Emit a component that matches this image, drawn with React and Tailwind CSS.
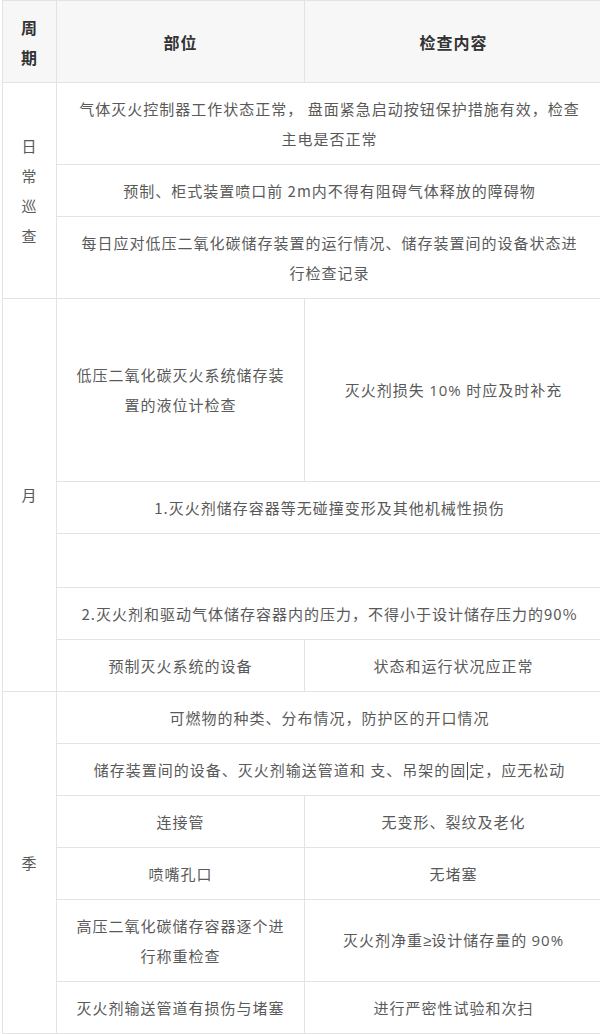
import React from "react";

const cell =
  "border border-[#e3e3e3] px-[18px] py-[10.5px] text-center align-middle leading-[30px]";
const side =
  "border border-[#e3e3e3] px-[12px] py-[10.5px] text-center align-middle leading-[30px]";

const Row = ({ children, className = "" }) => (
  <tr className={className}>{children}</tr>
);

export default function App() {
  return (
    <div className="w-[600px] overflow-hidden bg-white font-['Noto_Sans_CJK_SC','Noto_Sans',sans-serif]">
      <table className="ml-[2px] w-[600px] table-fixed border-collapse text-[15px] tracking-[1px] text-[#595959]">
        <colgroup>
          <col className="w-[54px]" />
          <col className="w-[248px]" />
          <col className="w-[298px]" />
        </colgroup>
        <thead>
          <tr className="bg-[#f7f7f7] text-[16px] font-bold text-[#333]">
            <th className={side}>周期</th>
            <th className={cell}>部位</th>
            <th className={cell}>检查内容</th>
          </tr>
        </thead>
        <tbody>
          {/* 日常巡查 */}
          <Row>
            <td className={side} rowSpan={3}>
              日常巡查
            </td>
            <td className={cell} colSpan={2}>
              气体灭火控制器工作状态正常， 盘面紧急启动按钮保护措施有效，检查主电是否正常
            </td>
          </Row>
          <Row>
            <td className={cell} colSpan={2}>
              预制、柜式装置喷口前 2m内不得有阻碍气体释放的障碍物
            </td>
          </Row>
          <Row>
            <td className={cell} colSpan={2}>
              每日应对低压二氧化碳储存装置的运行情况、储存装置间的设备状态进行检查记录
            </td>
          </Row>

          {/* 月 */}
          <Row>
            <td className={side} rowSpan={5}>
              月
            </td>
            <td className={`${cell} h-[183px]`}>
              低压二氧化碳灭火系统储存装置的液位计检查
            </td>
            <td className={cell}>
              灭火剂损失 <span className="font-['Open_Sans',sans-serif]">10%</span> 时应及时补充
            </td>
          </Row>
          <Row>
            <td className={cell} colSpan={2}>
              1.灭火剂储存容器等无碰撞变形及其他机械性损伤
            </td>
          </Row>
          <Row>
            <td className={`${cell} h-[54px]`} colSpan={2}>
              &nbsp;
            </td>
          </Row>
          <Row>
            <td className={cell} colSpan={2}>
              2.灭火剂和驱动气体储存容器内的压力，不得小于设计储存压力的90%
            </td>
          </Row>
          <Row>
            <td className={cell}>预制灭火系统的设备</td>
            <td className={cell}>状态和运行状况应正常</td>
          </Row>

          {/* 季 */}
          <Row>
            <td className={side} rowSpan={6}>
              季
            </td>
            <td className={cell} colSpan={2}>
              可燃物的种类、分布情况，防护区的开口情况
            </td>
          </Row>
          <Row>
            <td className={cell} colSpan={2}>
              储存装置间的设备、灭火剂输送管道和 支、吊架的固
              <span className="mx-px inline-block h-[18px] w-px bg-[#444] align-middle"></span>
              定，应无松动
            </td>
          </Row>
          <Row>
            <td className={cell}>连接管</td>
            <td className={cell}>无变形、裂纹及老化</td>
          </Row>
          <Row>
            <td className={cell}>喷嘴孔口</td>
            <td className={cell}>无堵塞</td>
          </Row>
          <Row>
            <td className={cell}>高压二氧化碳储存容器逐个进行称重检查</td>
            <td className={cell}>
              灭火剂净重<span className="font-['Liberation_Sans',sans-serif] tracking-normal">≥</span>设计储存量的{" "}
              <span className="font-['Open_Sans',sans-serif]">90%</span>
            </td>
          </Row>
          <Row>
            <td className={cell}>灭火剂输送管道有损伤与堵塞</td>
            <td className={cell}>进行严密性试验和次扫</td>
          </Row>
        </tbody>
      </table>
    </div>
  );
}
